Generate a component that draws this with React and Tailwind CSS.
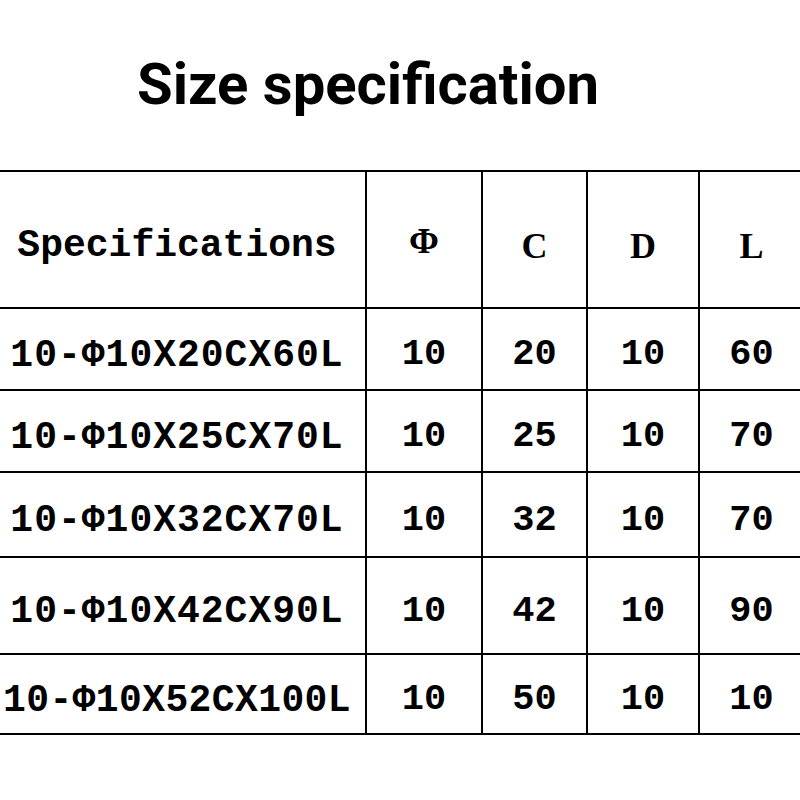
import React from "react";

const rows = [
  { spec: "10-Φ10X20CX60L", v: ["10", "20", "10", "60"], h: "h-[82px]", t: "tracking-[1px]" },
  { spec: "10-Φ10X25CX70L", v: ["10", "25", "10", "70"], h: "h-[82px]", t: "tracking-[1px]" },
  { spec: "10-Φ10X32CX70L", v: ["10", "32", "10", "70"], h: "h-[85px]", t: "tracking-[1px]" },
  { spec: "10-Φ10X42CX90L", v: ["10", "42", "10", "90"], h: "h-[97px]", t: "tracking-[1px]" },
  { spec: "10-Φ10X52CX100L", v: ["10", "50", "10", "10"], h: "h-[80px]", t: "tracking-[0.4px]" },
];

const widths = ["w-[378px]", "w-[116px]", "w-[105px]", "w-[112px]", "w-[105px]"];

export default function App() {
  return (
    <div className="w-[800px] h-[800px] bg-white overflow-hidden">
      <div className="pt-[55px] pl-[137px] text-[58px] leading-none font-bold text-black whitespace-nowrap font-['Roboto',sans-serif]">
        Size specification
      </div>
      <div className="mt-[57px] ml-[-11px] w-[830px] border-t-[2px] border-black">
        <div className="flex h-[137px] border-b-[2px] border-black">
          <div className="w-[378px] shrink-0 border-r-[2px] border-black flex items-center justify-center pt-[12px] text-[38px] font-bold text-black font-['Liberation_Mono',monospace]">
            Specifications
          </div>
          {["Φ", "C", "D", "L"].map((t, i) => (
            <div
              key={t}
              className={`${widths[i + 1]} shrink-0 border-r-[2px] border-black flex items-center justify-center text-[36px] font-bold text-black font-['Liberation_Serif',serif] ${i === 0 ? "pt-[2px]" : "pt-[12px]"}`}
            >
              {t}
            </div>
          ))}
        </div>
        {rows.map((r) => (
          <div key={r.spec} className={`flex ${r.h} border-b-[2px] border-black`}>
            <div
              className={`w-[378px] shrink-0 border-r-[2px] border-black flex items-center justify-center pt-[12px] text-[38px] font-bold text-black whitespace-nowrap font-['Liberation_Mono',monospace] ${r.t}`}
            >
              {r.spec}
            </div>
            {r.v.map((n, i) => (
              <div
                key={i}
                className={`${widths[i + 1]} shrink-0 border-r-[2px] border-black flex items-center justify-center pt-[12px] text-[37px] font-bold text-black font-['Liberation_Mono',monospace]`}
              >
                {n}
              </div>
            ))}
          </div>
        ))}
      </div>
    </div>
  );
}
